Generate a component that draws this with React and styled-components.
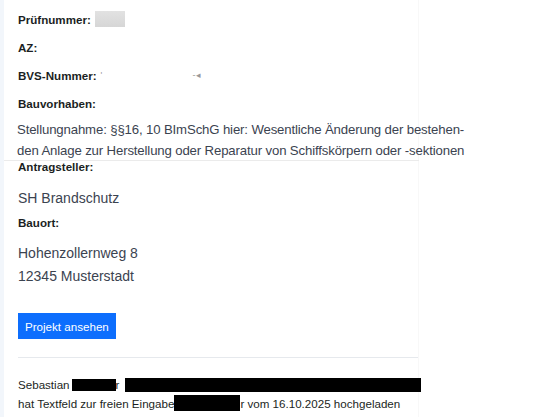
import styled, { createGlobalStyle } from "styled-components";

const GlobalStyle = createGlobalStyle`
  html, body { margin: 0; padding: 0; background: #fff; }
  body { font-family: "Liberation Sans", Arial, sans-serif; }
`;

const Page = styled.div`
  display: flex;
  min-height: 417px;
  overflow: hidden;
`;

const Strip = styled.div`
  width: 4px;
  flex: 0 0 4px;
  background: #f2f6fb;
`;

const Panel = styled.div`
  width: 415px;
  flex: 0 0 415px;
  padding: 11px 0 0 14px;
  box-sizing: border-box;
  border-right: 1px solid #f8f8f8;
`;

const Label = styled.div`
  display: flex;
  align-items: center;
  gap: 4px;
  height: 16px;
  margin-bottom: ${(p) => p.$mb ?? 12}px;
  font-size: 11.6px;
  font-weight: 700;
  color: #1b1f23;
  white-space: nowrap;
`;

const Blur = styled.span`
  display: inline-block;
  width: 30px;
  height: 16px;
  background: linear-gradient(#e2e2e2, #d6d6d6);
`;

const Masked = styled.span`
  display: inline-flex;
  align-items: center;
  justify-content: space-between;
  width: 100px;
  height: 10px;
  font-weight: 400;
  color: #999;
  font-size: 9px;
`;

const Value = styled.div`
  font-size: ${(p) => p.$fs ?? 14}px;
  letter-spacing: ${(p) => p.$ls ?? 0}px;
  line-height: ${(p) => p.$lh ?? 21}px;
  color: #3b4350;
  white-space: nowrap;
  margin-bottom: ${(p) => p.$mb ?? 0}px;
  ${(p) =>
    p.$rule &&
    "border-bottom: 1px solid #ebebeb; margin-left: -14px; margin-right: -1px; padding-left: 13px; height: 41px;"}
`;

const Button = styled.button`
  display: block;
  margin-top: 25px;
  height: 26px;
  padding: 0 7px;
  border: none;
  border-radius: 0;
  background: #0d6efd;
  color: #fff;
  font-family: inherit;
  font-size: 11.6px;
`;

const Divider = styled.hr`
  margin: 18px 0 0;
  border: none;
  border-top: 1px solid #e6e9ed;
`;

const Activity = styled.div`
  margin-top: 17px;
  font-size: 11.6px;
  line-height: 19px;
  color: #1b1f23;
  white-space: nowrap;
`;

const Redact = styled.span`
  display: inline-block;
  width: ${(p) => p.$w}px;
  height: ${(p) => p.$h ?? 14}px;
  margin-left: ${(p) => p.$ml ?? 0}px;
  background: #000;
  vertical-align: ${(p) => p.$va ?? -3}px;
`;

export default function App() {
  return (
    <>
      <GlobalStyle />
      <Page>
        <Strip />
        <Panel>
          <Label>
            Prüfnummer: <Blur />
          </Label>
          <Label>AZ:</Label>
          <Label>
            BVS-Nummer:
            <Masked>
              <span>'</span>
              <span>-◂</span>
            </Masked>
          </Label>
          <Label $mb={8}>Bauvorhaben:</Label>
          <Value $rule $fs={13.2} $ls={-0.14} $mb={-3}>
            Stellungnahme: §§16, 10 BImSchG hier: Wesentliche Änderung der bestehen-
            <br />
            den Anlage zur Herstellung oder Reparatur von Schiffskörpern oder -sektionen
          </Value>
          <Label $mb={14}>Antragsteller:</Label>
          <Value $mb={5}>SH Brandschutz</Value>
          <Label $mb={12}>Bauort:</Label>
          <Value $lh={23}>
            Hohenzollernweg 8
            <br />
            12345 Musterstadt
          </Value>
          <Button>Projekt ansehen</Button>
          <Divider />
          <Activity>
            Sebastian<Redact $w={44} $h={12} $va={-2} $ml={2} />r
            <Redact $w={296} $ml={6} />
            <br />
            hat Textfeld zur freien Eingabe<Redact $w={66} $h={16} />r vom 16.10.2025 hochgeladen
          </Activity>
        </Panel>
      </Page>
    </>
  );
}
